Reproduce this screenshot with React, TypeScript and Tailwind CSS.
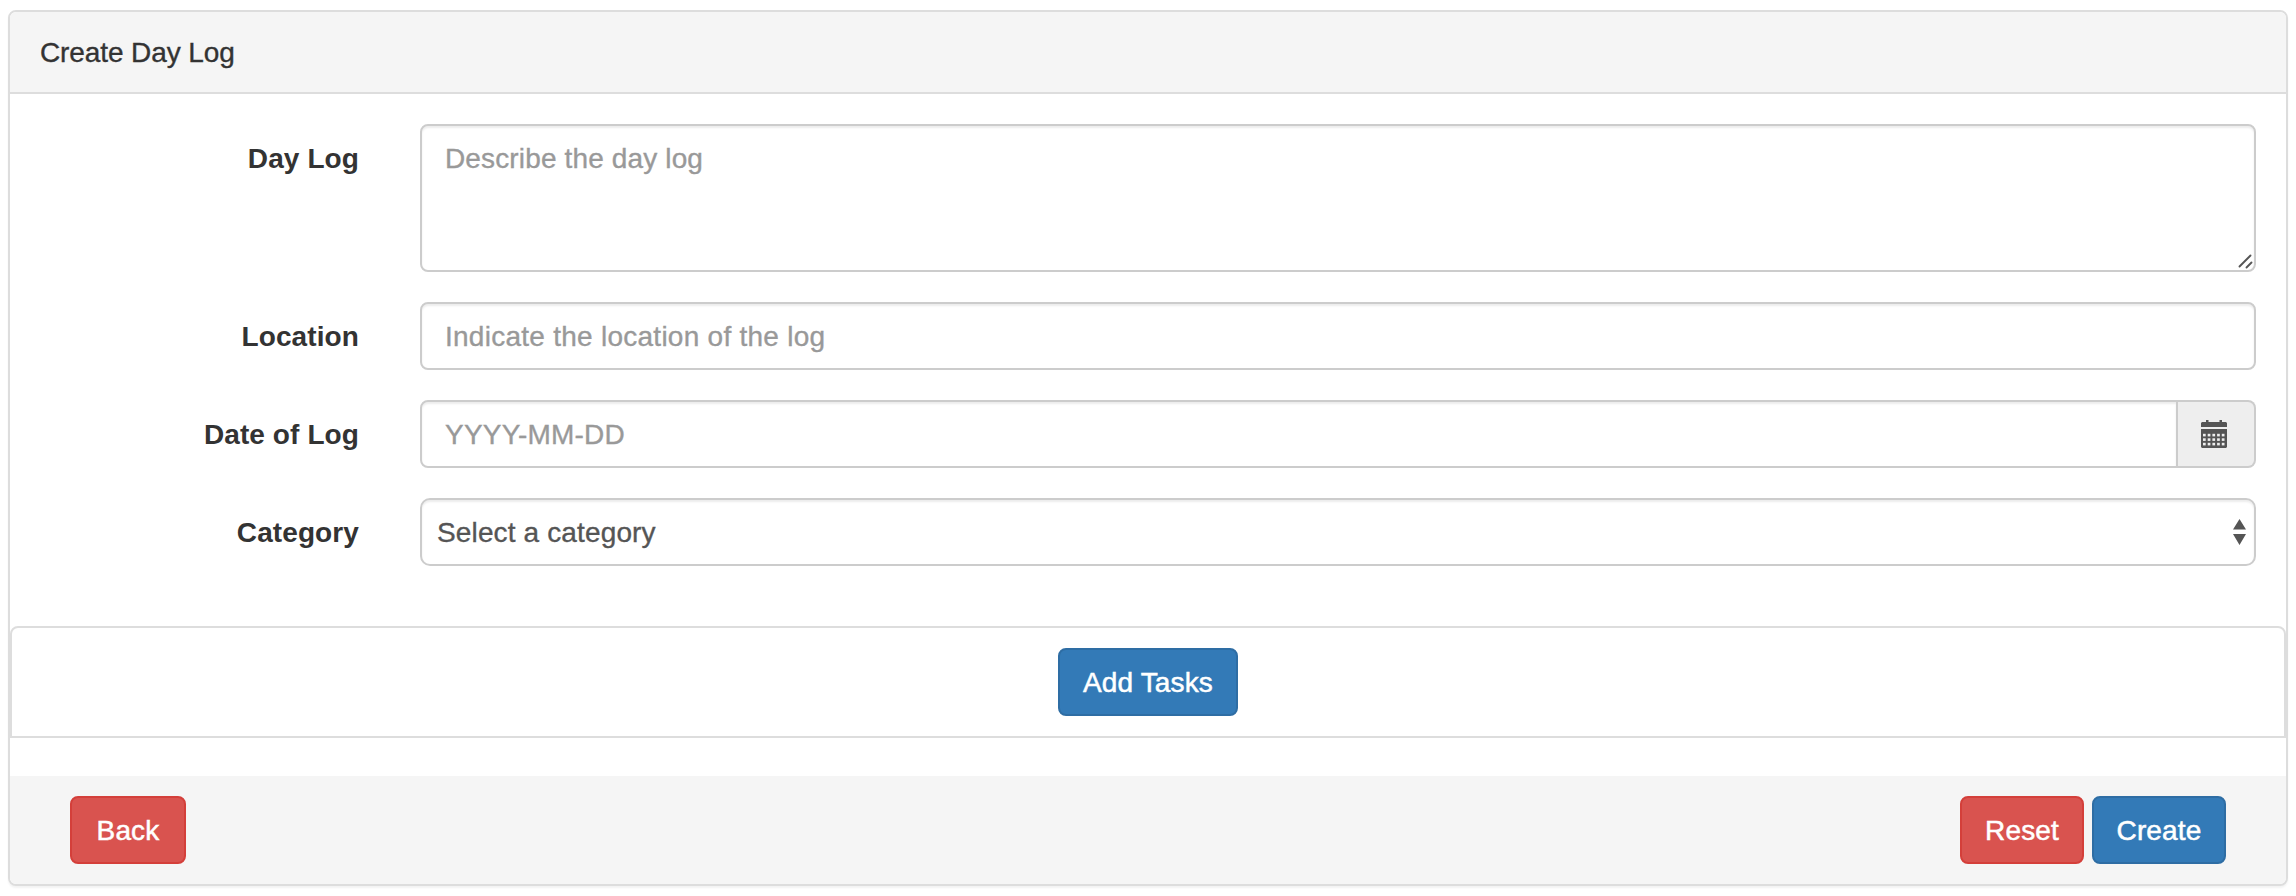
import type { ReactNode } from "react";

const control =
  "block w-full rounded-[8px] border-2 border-[#ccc] bg-white text-[28px] leading-[40px] text-[#555] placeholder:text-[#999] placeholder:opacity-100 shadow-[inset_0_2px_2px_rgba(0,0,0,0.075)] outline-none [-webkit-text-stroke:0.35px]";

const button =
  "h-[68px] rounded-[8px] border-2 pt-[2px] text-center text-[28px] leading-[40px] tracking-[0.15px] text-white [-webkit-text-stroke:0.5px]";
const danger = "border-[#d43f3a] bg-[#d9534f]";
const primary = "border-[#2e6da4] bg-[#337ab7]";

function Field({ label, children }: { label: string; children: ReactNode }) {
  return (
    <div className="flex">
      <label className="w-[349px] shrink-0 pt-[15px] text-right font-bold tracking-[0.1px]">{label}</label>
      <div className="ml-[61px] mr-[30px] min-w-0 flex-1">{children}</div>
    </div>
  );
}

function CalendarIcon() {
  const columns = [0, 1, 2, 3, 4];
  const rows = [0, 1, 2];
  return (
    <svg width="26" height="28" viewBox="0 0 26 28" fill="#555">
      <path d="M5 0h2.500v2h11V0h2.500v2h4l1 1v4H0V3l1-1h4zM0 9h26v18l-1 1H1l-1-1z" />
      {rows.map((r) =>
        columns.map((c) => (
          <rect key={`${r}-${c}`} x={2 + c * 4.7} y={13.8 + r * 4.5} width="2.7" height="2.6" fill="#eee" />
        )),
      )}
    </svg>
  );
}

export default function App() {
  return (
    <main className="h-[896px] w-[2296px] bg-white px-[8px] pt-[10px] font-['Liberation_Sans',Arial,sans-serif] text-[28px] leading-[40px] text-[#333]">
      <form className="flex h-[876px] flex-col rounded-[8px] border-2 border-[#ddd] bg-white shadow-[0_2px_2px_rgba(0,0,0,0.05)]">
        <header className="h-[82px] shrink-0 rounded-t-[6px] border-b-2 border-[#ddd] bg-[#f5f5f5] px-[30px] pt-[21px]">
          <h3 className="tracking-[-0.1px] [-webkit-text-stroke:0.35px]">Create Day Log</h3>
        </header>
        <div className="flex h-[532px] shrink-0 flex-col gap-[30px] pt-[30px]">
          <Field label="Day Log">
            <div className="relative h-[148px]">
              <textarea className={`${control} h-[148px] resize-none px-[23px] pb-[11px] pt-[13px] tracking-[0.14px]`} placeholder="Describe the day log" />
              <svg className="absolute bottom-[2px] right-[2px]" width="16" height="16" viewBox="0 0 16 16" stroke="#555" strokeWidth="1.9" strokeLinecap="round">
                <path d="M1.500 12.500 12.500 1.500M8.500 13.500l5-5" />
              </svg>
            </div>
          </Field>
          <Field label="Location">
            <input className={`${control} h-[68px] px-[23px] pt-[2px] tracking-[0.26px]`} placeholder="Indicate the location of the log" />
          </Field>
          <Field label="Date of Log">
            <div className="flex">
              <input className={`${control} h-[68px] min-w-0 flex-1 rounded-r-none px-[23px] pt-[2px] tracking-[0.2px]`} placeholder="YYYY-MM-DD" />
              <span className="flex h-[68px] w-[78px] shrink-0 items-center rounded-r-[8px] border-2 border-l-0 border-[#ccc] bg-[#eee] pl-[23px]">
                <CalendarIcon />
              </span>
            </div>
          </Field>
          <Field label="Category">
            <div className="relative h-[68px]">
              <select className={`${control} h-[68px] appearance-none rounded-[10px] px-[15px] pt-[2px] tracking-[0.14px]`} defaultValue="">
                <option value="">Select a category</option>
              </select>
              <svg className="pointer-events-none absolute right-[10px] top-[21px]" width="13" height="26" viewBox="0 0 13 26" fill="#555">
                <path d="M6.500 0 13 10.500H0zM0 15h13L6.500 26z" />
              </svg>
            </div>
          </Field>
        </div>
        <section className="flex h-[112px] shrink-0 items-center justify-center rounded-t-[8px] border-2 border-[#ddd]">
          <button type="button" className={`${button} ${primary} w-[180px]`}>Add Tasks</button>
        </section>
        <footer className="mt-[38px] flex h-[108px] shrink-0 items-center rounded-b-[6px] bg-[#f5f5f5] px-[60px]">
          <button type="button" className={`${button} ${danger} w-[116px]`}>Back</button>
          <button type="button" className={`${button} ${danger} ml-auto w-[124px]`}>Reset</button>
          <button type="button" className={`${button} ${primary} ml-[8px] w-[134px]`}>Create</button>
        </footer>
      </form>
    </main>
  );
}
